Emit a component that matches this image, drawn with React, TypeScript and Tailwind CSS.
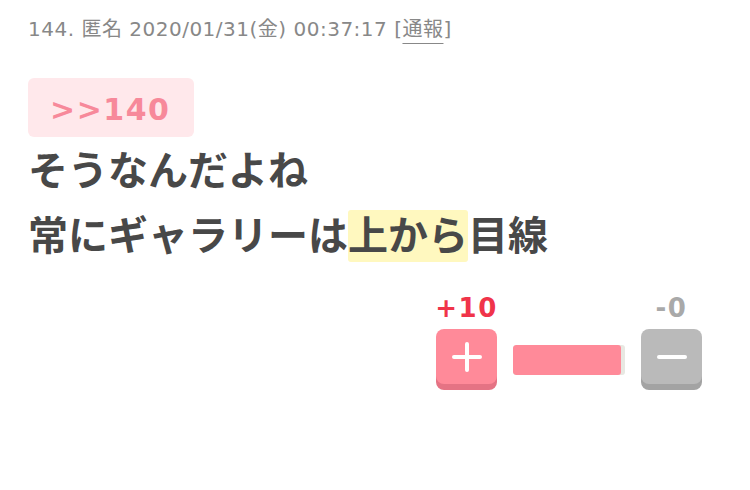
import React from "react";

export default function App() {
  return (
    <div className="w-[750px] h-[490px] bg-white overflow-hidden" style={{ fontFamily: '"DejaVu Sans", "Noto Sans CJK JP", sans-serif' }}>
      <div className="pl-[28px] pt-[15px] text-[20px] leading-[28px] tracking-[0.5px] text-[#888888] whitespace-nowrap">
        144. 匿名 2020/01/31(金) 00:37:17 [<span className="underline underline-offset-[7px] decoration-1">通報</span>]
      </div>
      <div className="pl-[28px] mt-[35px]">
        <div className="inline-flex h-[59px] pl-[22px] pr-[24px] pt-[4px] rounded-[6px] bg-[#ffe8eb] text-[#f7899a] font-bold text-[30px] leading-[55px] tracking-[1.5px]">
          &gt;&gt;140
        </div>
      </div>
      <div className="pl-[28px] mt-[-1px] text-[40px] leading-[65px] font-bold text-[#484848] whitespace-nowrap" style={{ fontFamily: '"Noto Sans CJK JP", sans-serif' }}>
        <div>そうなんだよね</div>
        <div>
          常にギャラリーは<span className="inline-block bg-[#fff8bf] rounded-[3px] leading-[47.5px] pb-[4.5px]">上から</span>目線
        </div>
      </div>
      <div className="flex justify-end items-end pr-[48px] mt-[29px]">
        <div className="flex flex-col items-center w-[61px]">
          <span className="text-[26px] leading-[26px] font-bold tracking-[1.5px] text-[#f0344a] mb-[8px]">+10</span>
          <button className="w-[61px] h-[55px] rounded-[8px] bg-[#ff8a99] shadow-[0_6px_0_#e57384] flex items-center justify-center mb-[6px]">
            <svg width="30" height="30" viewBox="0 0 30 30">
              <path d="M15 2V28M2 15H28" stroke="white" strokeWidth="4" strokeLinecap="round" />
            </svg>
          </button>
        </div>
        <div className="mx-[16px] mb-[15.5px] w-[112px] h-[30px] rounded-[3px] bg-[#e8e8e2] overflow-hidden flex">
          <div className="h-full bg-[#ff8a99] rounded-[3px]" style={{ width: "108px" }} />
        </div>
        <div className="flex flex-col items-center w-[61px]">
          <span className="text-[26px] leading-[26px] font-bold tracking-[1.5px] text-[#a9a9a9] mb-[8px]">-0</span>
          <button className="w-[61px] h-[55px] rounded-[8px] bg-[#bababa] shadow-[0_6px_0_#a3a3a3] flex items-center justify-center mb-[6px]">
            <svg width="30" height="30" viewBox="0 0 30 30">
              <path d="M2 15H28" stroke="white" strokeWidth="4" strokeLinecap="round" />
            </svg>
          </button>
        </div>
      </div>
    </div>
  );
}
